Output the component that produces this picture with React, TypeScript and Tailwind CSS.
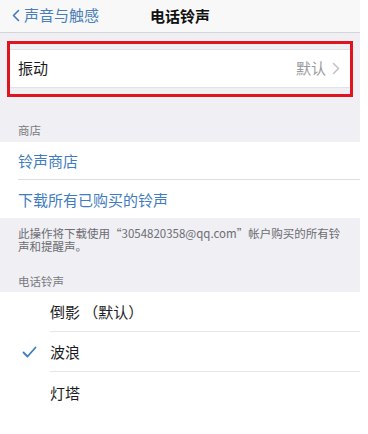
const font = "font-['Noto_Sans_CJK_SC','Noto_Sans',sans-serif]";

function Chevron({ className }: { className?: string }) {
  return (
    <svg width="8" height="13" viewBox="0 0 8 13" className={className}>
      <path d="M1.5 1.5 L6.5 6.5 L1.5 11.5" fill="none" stroke="currentColor" strokeWidth="1.6" strokeLinecap="round" strokeLinejoin="round" />
    </svg>
  );
}

function Check() {
  return (
    <svg width="15" height="12" viewBox="0 0 15 12">
      <path d="M1.5 6.5 L5.5 10.5 L13.5 1.5" fill="none" stroke="#3f7cc0" strokeWidth="1.8" strokeLinecap="round" strokeLinejoin="round" />
    </svg>
  );
}

function Ringtone({ name, checked, last }: { name: string; checked?: boolean; last?: boolean }) {
  return (
    <div className="flex h-[40px] items-center">
      <div className="flex w-[50px] shrink-0 justify-center pl-[8px]">{checked && <Check />}</div>
      <div
        className={`flex h-full flex-1 items-center pt-[2px] text-[15px] text-[#1c1c1e] ${
          last ? "" : "border-b border-[#e6e6e9]"
        }`}
      >
        {name}
      </div>
    </div>
  );
}

export default function App() {
  return (
    <div className={`flex h-[434px] w-[368px] bg-white ${font}`}>
      <div className="flex w-[360px] flex-col bg-[#efeff4]">
        {/* nav */}
        <div className="relative flex h-[33px] shrink-0 items-center border-b border-[#d4d5d9] bg-[#f8f8f8] pb-[2px]">
          <div className="flex items-center gap-[4px] pl-[12px] text-[15px] text-[#4a7fb8]">
            <Chevron className="rotate-180 text-[#3f7cc0]" />
            <span>声音与触感</span>
          </div>
          <div className="absolute left-0 right-0 top-[5px] text-center text-[15px] font-bold text-[#111]">
            电话铃声
          </div>
        </div>

        {/* vibration, highlighted */}
        <div className="mx-[7px] mt-[8px] border-[3px] border-[#e0141e] pb-[6px] pt-[5px]">
          <div className="flex h-[39px] items-center justify-between border-y border-[#e2e2e6] bg-white pl-[8px] pr-[10px]">
            <span className="text-[15px] text-[#1c1c1e]">振动</span>
            <span className="flex items-center gap-[6px] text-[15px] text-[#9a9a9e]">
              默认
              <Chevron className="text-[#c4c4c8]" />
            </span>
          </div>
        </div>

        {/* store */}
        <div className="px-[18px] pb-[4px] pt-[25px] text-[11.5px] leading-[16px] text-[#7a7a7f]">商店</div>
        <div className="bg-white">
          <div className="ml-[18px] flex h-[38px] items-center border-b border-[#dedee2] pt-[2px] text-[15px] text-[#3f7cc0]">
            铃声商店
          </div>
          <div className="flex h-[38px] items-center pl-[18px] pt-[3px] text-[15px] text-[#3f7cc0]">
            下载所有已购买的铃声
          </div>
        </div>
        <div className="px-[18px] pt-[9px] text-[11.5px] leading-[13px] text-[#6d6d72]">
          此操作将下载使用“3054820358@qq.com”帐户购买的所有铃声和提醒声。
        </div>

        {/* ringtones */}
        <div className="px-[18px] pb-[3px] pt-[20px] text-[11.5px] leading-[16px] text-[#7a7a7f]">电话铃声</div>
        <div className="flex-1 bg-white">
          <Ringtone name="倒影 （默认）" />
          <Ringtone name="波浪" checked />
          <Ringtone name="灯塔" last />
        </div>
      </div>
    </div>
  );
}
